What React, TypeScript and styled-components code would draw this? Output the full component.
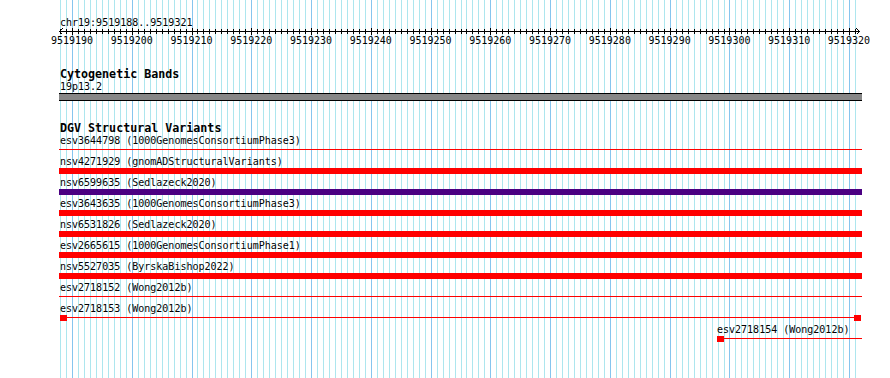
import React from "react";
import styled, { createGlobalStyle } from "styled-components";

const BP_START = 9519188;
const BP_END = 9519321;
const SPAN = BP_END - BP_START + 1;
const SCALE = 801 / SPAN;
const PANEL_W = 803;
const PANEL_H = 378;

const xOf = (k: number) => Math.round(1 + k * SCALE);

const GlobalStyle = createGlobalStyle`
  html, body { margin: 0; padding: 0; background: #ffffff; }
  body { font-family: "DejaVu Sans Mono", "Liberation Mono", monospace; color: #000; }
`;

const Page = styled.div`
  width: 890px;
  height: ${PANEL_H}px;
  display: flex;
  overflow: hidden;
  background: #fff;
`;

const Gutter = styled.div`
  width: 59px;
  flex: none;
`;

const Panel = styled.div`
  position: relative;
  width: ${PANEL_W}px;
  height: ${PANEL_H}px;
  flex: none;
`;

const GridLayer = styled.svg`
  position: absolute;
  left: 0;
  top: 0;
  display: block;
`;

const Tracks = styled.div`
  position: relative;
  display: flex;
  flex-direction: column;
  padding-top: 16px;
`;

const SmallText = styled.div<{ $indent?: number }>`
  font-size: 10px;
  line-height: 13px;
  height: 13px;
  white-space: pre;
  padding-left: ${(p) => p.$indent ?? 1}px;
`;

const TrackTitle = styled.div`
  margin-top: 21px;
  font-size: 11.67px;
  font-weight: bold;
  line-height: 12px;
  height: 12px;
  white-space: pre;
  padding-left: 1px;
`;

const RulerSvg = styled.svg`
  display: block;
  overflow: visible;
`;

const TickLabels = styled.div`
  display: flex;
  margin-left: ${(1 + 2 * SCALE) - 5 * SCALE}px;
  height: 12px;
`;

const TickLabel = styled.div`
  flex: none;
  width: ${10 * SCALE}px;
  text-align: center;
  font-size: 10px;
  line-height: 12px;
  white-space: pre;
`;

const Band = styled.div`
  height: 8px;
  box-sizing: border-box;
  border-top: 1px solid #000;
  border-bottom: 1px solid #000;
  background: #878787;
`;

const FeatureRow = styled.div<{ $offset: number }>`
  display: flex;
  flex-direction: column;
  padding-left: ${(p) => p.$offset}px;
  margin-bottom: 2px;
`;

const GlyphArea = styled.div`
  height: 6px;
  display: flex;
  align-items: stretch;
`;

const SolidBar = styled.div<{ $color: string }>`
  flex: 1;
  background: ${(p) => p.$color};
`;

const Connector = styled.div<{ $color: string }>`
  flex: 1;
  position: relative;
  &::after {
    content: "";
    display: block;
    margin-top: 2px;
    height: 1px;
    background: ${(p) => p.$color};
  }
`;

const Cap = styled.div<{ $color: string }>`
  flex: none;
  width: 7px;
  background: ${(p) => p.$color};
`;

const Spacer = styled.div<{ $w: number }>`
  flex: none;
  width: ${(p) => p.$w}px;
`;

type Kind = "line" | "bar" | "split" | "tail";

interface Feature {
  name: string;
  source: string;
  kind: Kind;
  color: string;
  offset?: number;
}

const RED = "#ff0000";
const INDIGO = "#4b0082";

const features: Feature[] = [
  { name: "esv3644798", source: "1000GenomesConsortiumPhase3", kind: "line", color: RED },
  { name: "nsv4271929", source: "gnomADStructuralVariants", kind: "bar", color: RED },
  { name: "nsv6599635", source: "Sedlazeck2020", kind: "bar", color: INDIGO },
  { name: "esv3643635", source: "1000GenomesConsortiumPhase3", kind: "bar", color: RED },
  { name: "nsv6531826", source: "Sedlazeck2020", kind: "bar", color: RED },
  { name: "esv2665615", source: "1000GenomesConsortiumPhase1", kind: "bar", color: RED },
  { name: "nsv5527035", source: "ByrskaBishop2022", kind: "bar", color: RED },
  { name: "esv2718152", source: "Wong2012b", kind: "line", color: RED },
  { name: "esv2718153", source: "Wong2012b", kind: "split", color: RED },
  { name: "esv2718154", source: "Wong2012b", kind: "tail", color: RED, offset: 658 },
];

const Glyph: React.FC<{ f: Feature }> = ({ f }) => {
  switch (f.kind) {
    case "bar":
      return (
        <GlyphArea>
          <SolidBar $color={f.color} />
        </GlyphArea>
      );
    case "line":
      return (
        <GlyphArea>
          <Connector $color={f.color} />
        </GlyphArea>
      );
    case "split":
      return (
        <GlyphArea>
          <Spacer $w={1} />
          <Cap $color={f.color} />
          <Connector $color={f.color} />
          <Cap $color={f.color} />
          <Spacer $w={1} />
        </GlyphArea>
      );
    case "tail":
      return (
        <GlyphArea>
          <Cap $color={f.color} />
          <Connector $color={f.color} />
        </GlyphArea>
      );
  }
};

const Grid: React.FC = () => {
  const lines = [];
  for (let k = 0; k < SPAN; k++) {
    const major = (BP_START + k) % 10 === 0;
    const x = xOf(k) + 0.5;
    lines.push(
      <line
        key={k}
        x1={x}
        x2={x}
        y1={0}
        y2={PANEL_H}
        stroke={major ? "#86c5ee" : "#ade6ee"}
        strokeWidth={1}
      />
    );
  }
  return (
    <GridLayer width={PANEL_W} height={PANEL_H} shapeRendering="crispEdges">
      {lines}
    </GridLayer>
  );
};

const Ruler: React.FC = () => {
  const ticks = [];
  for (let k = 0; k < SPAN; k++) {
    const major = (BP_START + k) % 10 === 0;
    const x = xOf(k) + 0.5;
    ticks.push(
      <line
        key={k}
        x1={x}
        x2={x}
        y1={major ? -1 : 0}
        y2={major ? 6 : 5}
        stroke="#000"
      />
    );
  }
  const y = 2.5;
  return (
    <RulerSvg width={PANEL_W} height={6} shapeRendering="crispEdges">
      <line x1={0} x2={801} y1={y} y2={y} stroke="#000" />
      <polyline points={`3.5,-0.5 0.5,${y} 3.5,5.5`} fill="none" stroke="#000" />
      <polyline points={`797.5,-0.5 800.5,${y} 797.5,5.5`} fill="none" stroke="#000" />
      {ticks}
    </RulerSvg>
  );
};

const tickValues: number[] = [];
for (let v = Math.ceil(BP_START / 10) * 10; v <= BP_END; v += 10) tickValues.push(v);

export default function App() {
  return (
    <>
      <GlobalStyle />
      <Page>
        <Gutter />
        <Panel>
          <Grid />
          <Tracks>
            <SmallText>{`chr19:${BP_START}..${BP_END}`}</SmallText>
            <Ruler />
            <TickLabels>
              {tickValues.map((v) => (
                <TickLabel key={v}>{v}</TickLabel>
              ))}
            </TickLabels>

            <TrackTitle>Cytogenetic Bands</TrackTitle>
            <SmallText>19p13.2</SmallText>
            <Band />

            <TrackTitle>DGV Structural Variants</TrackTitle>
            {features.map((f) => (
              <FeatureRow key={f.name} $offset={f.offset ?? 0}>
                <SmallText $indent={f.offset ? 0 : 1}>{`${f.name} (${f.source})`}</SmallText>
                <Glyph f={f} />
              </FeatureRow>
            ))}
          </Tracks>
        </Panel>
      </Page>
    </>
  );
}
